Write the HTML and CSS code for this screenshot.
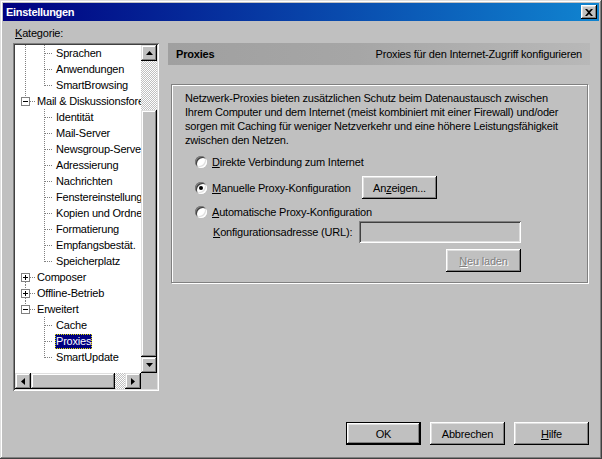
FILE: index.html
```
<!DOCTYPE html>
<html lang="de">
<head>
    <meta charset="UTF-8">
    <title>Einstellungen</title>
    <link rel="stylesheet" href="styles.css">
</head>
<body>
    <div class="window">
        <div class="titlebar">
            <span class="title">Einstellungen</span>
            <div class="close">
                <svg width="8" height="7" viewBox="0 0 8 7"><path d="M0 0h2l2 2 2-2h2L5 3.5 8 7H6L4 5 2 7H0l3-3.5z" fill="#000"/></svg>
            </div>
        </div>

        <div class="client">
            <div class="main">
                <!-- category tree -->
                <div class="category">
                    <div class="cat-label"><u>K</u>ategorie:</div>
                    <div class="tree">
                        <div class="tree-list">
                            <div class="row nav-child"><span class="txt lv2">Sprachen</span></div>
                            <div class="row nav-child"><span class="txt lv2">Anwendungen</span></div>
                            <div class="row nav-child last"><span class="txt lv2">SmartBrowsing</span></div>
                            <div class="row node up">
                                <svg class="exp" width="9" height="9" viewBox="0 0 9 9"><rect x=".5" y=".5" width="8" height="8" fill="#fff" stroke="#808080"/><path d="M2 4.5h5" stroke="#000"/></svg>
                                <span class="txt lv1">Mail &amp; Diskussionsforen</span>
                            </div>
                            <div class="row child"><span class="txt lv2">Identität</span></div>
                            <div class="row child"><span class="txt lv2">Mail-Server</span></div>
                            <div class="row child"><span class="txt lv2">Newsgroup-Server</span></div>
                            <div class="row child"><span class="txt lv2">Adressierung</span></div>
                            <div class="row child"><span class="txt lv2">Nachrichten</span></div>
                            <div class="row child"><span class="txt lv2">Fenstereinstellungen</span></div>
                            <div class="row child"><span class="txt lv2">Kopien und Ordner</span></div>
                            <div class="row child"><span class="txt lv2">Formatierung</span></div>
                            <div class="row child"><span class="txt lv2">Empfangsbestät.</span></div>
                            <div class="row child last"><span class="txt lv2">Speicherplatz</span></div>
                            <div class="row node down">
                                <svg class="exp" width="9" height="9" viewBox="0 0 9 9"><rect x=".5" y=".5" width="8" height="8" fill="#fff" stroke="#808080"/><path d="M2 4.5h5M4.5 2v5" stroke="#000"/></svg>
                                <span class="txt lv1">Composer</span>
                            </div>
                            <div class="row node both">
                                <svg class="exp" width="9" height="9" viewBox="0 0 9 9"><rect x=".5" y=".5" width="8" height="8" fill="#fff" stroke="#808080"/><path d="M2 4.5h5M4.5 2v5" stroke="#000"/></svg>
                                <span class="txt lv1">Offline-Betrieb</span>
                            </div>
                            <div class="row node up">
                                <svg class="exp" width="9" height="9" viewBox="0 0 9 9"><rect x=".5" y=".5" width="8" height="8" fill="#fff" stroke="#808080"/><path d="M2 4.5h5" stroke="#000"/></svg>
                                <span class="txt lv1">Erweitert</span>
                            </div>
                            <div class="row child"><span class="txt lv2">Cache</span></div>
                            <div class="row child"><span class="txt lv2 selected">Proxies</span></div>
                            <div class="row child last"><span class="txt lv2">SmartUpdate</span></div>
                        </div>

                        <div class="vscroll">
                            <div class="sbtn"><svg width="7" height="4" viewBox="0 0 7 4"><path d="M3.5 0L7 4H0z" fill="#000"/></svg></div>
                            <div class="track" style="height: 49px"></div>
                            <div class="thumb" style="height: 247px"></div>
                            <div class="sbtn"><svg width="7" height="4" viewBox="0 0 7 4"><path d="M0 0h7L3.5 4z" fill="#000"/></svg></div>
                        </div>
                        <div class="hscroll">
                            <div class="sbtn"><svg width="4" height="7" viewBox="0 0 4 7"><path d="M0 3.5L4 0v7z" fill="#000"/></svg></div>
                            <div class="thumb" style="width: 84px"></div>
                            <div class="track" style="width: 10px"></div>
                            <div class="sbtn"><svg width="4" height="7" viewBox="0 0 4 7"><path d="M0 0l4 3.5L0 7z" fill="#000"/></svg></div>
                        </div>
                        <div class="corner"></div>
                    </div>
                </div>

                <!-- settings panel -->
                <div class="panel">
                    <div class="panel-head">
                        <b>Proxies</b>
                        <span>Proxies für den Internet-Zugriff konfigurieren</span>
                    </div>
                    <div class="group">
                        <p class="intro">Netzwerk-Proxies bieten zusätzlichen Schutz beim Datenaustausch zwischen<br>Ihrem Computer und dem Internet (meist kombiniert mit einer Firewall) und/oder<br>sorgen mit Caching für weniger Netzverkehr und eine höhere Leistungsfähigkeit<br>zwischen den Netzen.</p>

                        <div class="opt first">
                            <span class="radio"></span>
                            <span><u>D</u>irekte Verbindung zum Internet</span>
                        </div>
                        <div class="opt manual">
                            <span class="radio checked"></span>
                            <span class="opt-label"><u>M</u>anuelle Proxy-Konfiguration</span>
                            <button class="btn">An<u>z</u>eigen...</button>
                        </div>
                        <div class="opt">
                            <span class="radio"></span>
                            <span><u>A</u>utomatische Proxy-Konfiguration</span>
                        </div>
                        <div class="url">
                            <div class="url-row">
                                <span class="url-label"><u>K</u>onfigurationsadresse (URL):</span>
                                <div class="field"></div>
                            </div>
                            <div class="reload-row">
                                <button class="btn disabled"><u>N</u>eu laden</button>
                            </div>
                        </div>
                    </div>
                </div>
            </div>

            <div class="footer">
                <button class="btn default">OK</button>
                <button class="btn">Abbrechen</button>
                <button class="btn"><u>H</u>ilfe</button>
            </div>
        </div>
    </div>
</body>
</html>
```

FILE: styles.css
```
* {
    margin: 0;
    padding: 0;
    box-sizing: border-box;
}

body {
    background: #c0c0c0;
    font-family: "Liberation Sans", Arial, sans-serif;
    font-size: 11px;
    letter-spacing: -0.2px;
    color: #000;
}

u {
    text-decoration: underline;
    text-underline-offset: 1px;
}

/* window frame */
.window {
    width: 602px;
    height: 459px;
    padding: 3px;
    background: #c0c0c0;
    display: flex;
    flex-direction: column;
    box-shadow: inset -1px -1px #404040, inset 1px 1px #dfdfdf, inset -2px -2px #808080, inset 2px 2px #fff;
}

.titlebar {
    height: 18px;
    display: flex;
    align-items: center;
    justify-content: space-between;
    padding: 0 2px 0 3px;
    background: linear-gradient(to right, #000080, #1084d0);
}

.title {
    color: #fff;
    font-weight: bold;
    font-size: 11px;
    letter-spacing: -0.3px;
}

.close {
    width: 16px;
    height: 14px;
    display: flex;
    align-items: center;
    justify-content: center;
    background: #c0c0c0;
    box-shadow: inset -1px -1px #000, inset 1px 1px #fff, inset -2px -2px #808080, inset 2px 2px #dfdfdf;
}

.client {
    flex: 1;
    display: flex;
    flex-direction: column;
    padding: 6px 9px 11px 10px;
}

.main {
    display: flex;
    gap: 9px;
}

/* category tree */
.category {
    width: 146px;
}

.cat-label {
    height: 13px;
    line-height: 13px;
    padding-left: 2px;
    margin-bottom: 3px;
}

.tree {
    width: 146px;
    height: 348px;
    padding: 2px;
    display: grid;
    grid-template-columns: 126px 16px;
    grid-template-rows: 328px 16px;
    box-shadow: inset 1px 1px #808080, inset -1px -1px #fff, inset 2px 2px #404040, inset -2px -2px #dfdfdf;
}

.tree-list {
    background: #fff;
    overflow: hidden;
}

.row {
    height: 16px;
    display: flex;
    align-items: center;
    white-space: nowrap;
    background-repeat: no-repeat;
}

.row.nav-child {
    background-image:
        repeating-linear-gradient(#808080 0 1px, transparent 1px 2px),
        repeating-linear-gradient(#808080 0 1px, transparent 1px 2px),
        repeating-linear-gradient(90deg, #808080 0 1px, transparent 1px 2px);
    background-position: 10px 0, 29px 0, 30px 8px;
    background-size: 1px 16px, 1px 16px, 8px 1px;
}

.row.nav-child.last {
    background-size: 1px 16px, 1px 9px, 8px 1px;
}

.row.child {
    background-image:
        repeating-linear-gradient(#808080 0 1px, transparent 1px 2px),
        repeating-linear-gradient(90deg, #808080 0 1px, transparent 1px 2px);
    background-position: 29px 0, 30px 8px;
    background-size: 1px 16px, 8px 1px;
}

.row.child.last {
    background-size: 1px 9px, 8px 1px;
}

.row.node {
    padding-left: 6px;
    background-image:
        repeating-linear-gradient(90deg, #808080 0 1px, transparent 1px 2px),
        repeating-linear-gradient(#808080 0 1px, transparent 1px 2px),
        repeating-linear-gradient(#808080 0 1px, transparent 1px 2px);
    background-position: 15px 8px, 10px 0, 10px 13px;
    background-size: 6px 1px, 1px 4px, 1px 3px;
}

.row.node.up {
    background-size: 6px 1px, 1px 4px, 0 0;
}

.row.node.down {
    background-size: 6px 1px, 0 0, 1px 3px;
}

.exp {
    display: block;
    flex: none;
}

.txt {
    height: 15px;
    line-height: 15px;
    padding: 0 1px;
}

.txt.lv1 {
    margin-left: 6px;
}

.txt.lv2 {
    margin-left: 40px;
}

.txt.selected {
    background: #000080;
    color: #fff;
    outline: 1px dotted #e0e000;
    outline-offset: -1px;
}

/* scrollbars */
.vscroll {
    display: flex;
    flex-direction: column;
}

.hscroll {
    display: flex;
}

.sbtn,
.thumb {
    flex: none;
    width: 16px;
    height: 16px;
    display: flex;
    align-items: center;
    justify-content: center;
    background: #c0c0c0;
    box-shadow: inset -1px -1px #000, inset 1px 1px #dfdfdf, inset -2px -2px #808080, inset 2px 2px #fff;
}

.track {
    flex: none;
    width: 16px;
    height: 16px;
    background: repeating-conic-gradient(#c0c0c0 0 25%, #fff 0 50%) 0 0 / 2px 2px;
}

.corner {
    background: #c0c0c0;
}

/* right panel */
.panel {
    flex: 1;
    margin-top: 16px;
}

.panel-head {
    height: 22px;
    display: flex;
    align-items: center;
    justify-content: space-between;
    padding: 0 8px;
    background: linear-gradient(to right, #a0a0a0, #a6a6a6 45%, #b8b8b8);
}

.panel-head b {
    font-size: 11px;
}

.group {
    height: 199px;
    margin: 19px 2px 0 3px;
    padding: 6px 0 0 13px;
    border: 1px solid #808080;
    box-shadow: inset 1px 1px #fff, 1px 1px #fff;
}

.intro {
    line-height: 14px;
    white-space: nowrap;
}

.opt {
    height: 16px;
    display: flex;
    align-items: center;
    padding-left: 10px;
    margin-top: 5px;
}

.opt.first {
    margin-top: 7px;
}

.opt.manual {
    height: 23px;
    margin-top: 6px;
}

.radio {
    width: 12px;
    height: 12px;
    margin-right: 5px;
    border-radius: 50%;
    background: #fff;
    position: relative;
    box-shadow: inset 1px 1px #808080, inset -1px -1px #fff, inset 2px 2px #404040, inset -2px -2px #dfdfdf;
}

.radio.checked::after {
    content: "";
    position: absolute;
    left: 4px;
    top: 4px;
    width: 4px;
    height: 4px;
    border-radius: 50%;
    background: #000;
}

.opt-label {
    width: 150px;
}

.url {
    width: 308px;
    margin-left: 28px;
}

.url-row {
    height: 22px;
    margin-top: 1px;
    display: flex;
    align-items: center;
}

.url-label {
    width: 146px;
}

.field {
    width: 162px;
    height: 22px;
    background: #c0c0c0;
    box-shadow: inset 1px 1px #808080, inset -1px -1px #fff, inset 2px 2px #404040, inset -2px -2px #dfdfdf;
}

.reload-row {
    display: flex;
    justify-content: flex-end;
    margin-top: 6px;
}

/* buttons */
.btn {
    width: 75px;
    height: 23px;
    border: none;
    background: #c0c0c0;
    font-family: inherit;
    font-size: 11px;
    letter-spacing: inherit;
    color: #000;
    box-shadow: inset -1px -1px #000, inset 1px 1px #fff, inset -2px -2px #808080, inset 2px 2px #dfdfdf;
}

.btn.default {
    border: 1px solid #000;
}

.btn.disabled {
    color: #808080;
    text-shadow: 1px 1px #fff;
}

.footer {
    margin-top: auto;
    display: flex;
    justify-content: flex-end;
    gap: 9px;
    padding-right: 1px;
}
```
